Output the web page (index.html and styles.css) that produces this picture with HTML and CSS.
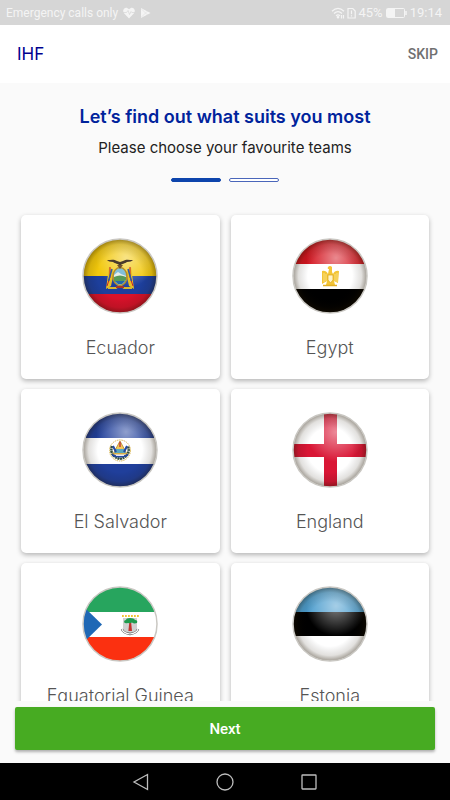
FILE: index.html
```
<!DOCTYPE html>
<html lang="en">
<head>
    <meta charset="UTF-8">
    <meta name="viewport" content="width=device-width, initial-scale=1.0">
    <title>IHF</title>
    <link rel="stylesheet" href="styles.css">
</head>
<body>
    <div class="status-bar">
        <div class="status-group carrier">
            <span>Emergency calls only</span>
            <svg class="heart-icon" width="12" height="12" viewBox="0 0 12 12">
                <path d="M6 11.5 1 6.3C-1.200 3 1.500-.2 4.200.9L6 2.300 7.800.9C10.500-.2 13.200 3 11 6.300Z" fill="#f4f4f4"/>
                <path d="M0 5.500h3.500L5 3.500l1.500 4 1.500-3 .8 1H12" fill="none" stroke="#d6d6d6" stroke-width=".7"/>
            </svg>
            <svg class="play-icon" width="11" height="12" viewBox="0 0 11 12">
                <path d="M1 1 10.500 6 1 11Z" fill="#f4f4f4"/>
                <path d="M1 1.500 8 8.500M1 10.500 8 3.500" stroke="#d6d6d6" stroke-width=".4"/>
            </svg>
        </div>
        <div class="status-group">
            <svg width="14" height="12" viewBox="0 0 14 12" fill="none" stroke="#f4f4f4" stroke-width="1.200">
                <path d="M1 4.200Q7-1.500 13 4.200M3 6.500Q7 2.800 11 6.500M5 8.700Q7 7 9 8.700"/>
                <circle cx="7" cy="10.300" r=".7" fill="#f4f4f4"/>
                <path d="M10.500 8v3.500M12.500 8v3.500"/>
            </svg>
            <svg class="sim-icon" width="9" height="12" viewBox="0 0 9 12" fill="none" stroke="#f4f4f4" stroke-width="1.200">
                <path d="M1 1.500h4.800L8.200 4v7H1ZM4.500 3.500v3.700M4.500 8.200v1.300"/>
            </svg>
            <span>45%</span>
            <svg class="battery-icon" width="21" height="10" viewBox="0 0 21 10">
                <rect x=".5" y=".5" width="18" height="9" rx="1" fill="none" stroke="#f4f4f4"/>
                <rect x="1" y="1" width="8" height="8" fill="#f4f4f4"/>
                <path d="M20 3v4" stroke="#f4f4f4" stroke-width="1.500"/>
            </svg>
            <span>19:14</span>
        </div>
    </div>

    <header class="app-bar">
        <h1>IHF</h1>
        <button type="button" class="skip">SKIP</button>
    </header>

    <main class="content">
        <div class="intro">
            <h2>Let’s find out what suits you most</h2>
            <p>Please choose your favourite teams</p>
            <div class="steps">
                <span class="step active"></span>
                <span class="step"></span>
            </div>
        </div>

        <div class="teams">
            <button type="button" class="team">
                <svg class="flag" viewBox="0 0 76 76">
                    <defs>
                        <clipPath id="round"><circle cx="38" cy="38" r="37"/></clipPath>
                        <radialGradient id="shade">
                            <stop offset=".6" stop-color="#000" stop-opacity="0"/>
                            <stop offset=".85" stop-color="#201400" stop-opacity=".13"/>
                            <stop offset="1" stop-color="#201400" stop-opacity=".42"/>
                        </radialGradient>
                        <radialGradient id="shine">
                            <stop offset="0" stop-color="#fff" stop-opacity=".5"/>
                            <stop offset=".6" stop-color="#fff" stop-opacity=".2"/>
                            <stop offset="1" stop-color="#fff" stop-opacity="0"/>
                        </radialGradient>
                        <g id="gloss">
                            <circle cx="44" cy="20" r="30" fill="url(#shine)"/>
                            <circle cx="38" cy="38" r="37" fill="url(#shade)"/>
                        </g>
                    </defs>
                    <g clip-path="url(#round)">
                        <path fill="#f2c80c" d="M0 0h76v38H0z"/>
                        <path fill="#1d3f9c" d="M0 38h76v18H0z"/>
                        <path fill="#d8122a" d="M0 56h76v20H0z"/>
                        <use href="#gloss"/>
                    </g>
                    <!-- coat of arms -->
                    <path d="M27 29 24 51l5-3 3-14ZM49 29l3 22-5-3-3-14Z" fill="#e8bf25"/>
                    <path d="M28 29v10l-3 9M48 29v10l3 9" fill="none" stroke="#c5202e" stroke-width="1"/>
                    <path d="M30 31 26.500 43M46 31l3.500 12" stroke="#2d58a7" stroke-width="1.500"/>
                    <path d="M26 50h8l4-3 4 3h8" fill="none" stroke="#d8b62d" stroke-width="2"/>
                    <ellipse cx="38" cy="38.500" rx="7" ry="9" fill="#82bfd9" stroke="#b68c25" stroke-width="1.500"/>
                    <path d="M32 37l4-3 3 2 5 2v3H32z" fill="#e7eee8"/>
                    <path d="M32 39q6-3 12 0v3q-6 4-12 1z" fill="#569a58"/>
                    <path d="M33 43h10l-3 3h-4z" fill="#2468a8"/>
                    <path d="M34 49h8" stroke="#a7352b" stroke-width="2"/>
                    <path d="M38 28c-2-3-5-2-7-4-3 0-5-1-6-2 4 0 7-1 10 1l3 1 3-1c3-2 6-1 10-1-1 1-3 2-6 2-2 2-5 1-7 4Z" fill="#493a2c"/>
                    <path d="M35 27h6l-3 4z" fill="#70512d"/>
                    <circle class="rim" cx="38" cy="38" r="37"/>
                </svg>
                <span>Ecuador</span>
            </button>

            <button type="button" class="team">
                <svg class="flag" viewBox="0 0 76 76">
                    <g clip-path="url(#round)">
                        <path fill="#d4141f" d="M0 0h76v26H0z"/>
                        <path fill="#fff" d="M0 26h76v25H0z"/>
                        <path fill="#000" d="M0 51h76v25H0z"/>
                        <use href="#gloss"/>
                    </g>
                    <!-- eagle -->
                    <path d="M30 33q4-1 6 3l1-5q-2 0-1-2 2-2 4 0v5l1 2q2-4 6-3l-1 12-4-2 1 4h-9l1-4-5 3z" fill="#f3c536"/>
                    <path d="M32 35v9M34 36v7M43 36v7M45 35v9" stroke="#fff0ae" stroke-width=".6"/>
                    <path d="M36 37h5v5l-2.500 3-2.500-3z" fill="#fff3c7" stroke="#dba719" stroke-width=".7"/>
                    <path d="M31 47.500h14" stroke="#e3af22" stroke-width="1.500"/>
                    <circle class="rim" cx="38" cy="38" r="37"/>
                </svg>
                <span>Egypt</span>
            </button>

            <button type="button" class="team">
                <svg class="flag" viewBox="0 0 76 76">
                    <g clip-path="url(#round)">
                        <path fill="#203f9b" d="M0 0h76v26H0z"/>
                        <path fill="#fff" d="M0 26h76v26H0z"/>
                        <path fill="#203f9b" d="M0 52h76v24H0z"/>
                        <use href="#gloss"/>
                    </g>
                    <!-- coat of arms -->
                    <circle cx="38" cy="38.500" r="10.500" fill="none" stroke="#dab755" stroke-width="1" stroke-dasharray="1.500 .8"/>
                    <path d="M30 34q-3 10 8 13 11-3 8-13" fill="none" stroke="#36503b" stroke-width="2.500" stroke-dasharray="2 .5"/>
                    <path d="M38 29l7 13H31z" fill="#f1c85a" stroke="#b48727" stroke-width=".8"/>
                    <path d="M34 37h8l2 4H32z" fill="#5aa6bc"/>
                    <path d="M38 30v5" stroke="#c23b3b" stroke-width="1.500"/>
                    <path d="M31 34l3 6M45 34l-3 6" stroke="#2449a1" stroke-width="2"/>
                    <path d="M30 42q8 3 16 0v2q-8 3-16 0z" fill="#2449a1"/>
                    <path d="M34 43.500h8" stroke="#fff" stroke-width=".8"/>
                    <circle class="rim" cx="38" cy="38" r="37"/>
                </svg>
                <span>El Salvador</span>
            </button>

            <button type="button" class="team">
                <svg class="flag" viewBox="0 0 76 76">
                    <g clip-path="url(#round)">
                        <path fill="#fff" d="M0 0h76v76H0z"/>
                        <path fill="#d91635" d="M32 0h13v32h31v13H45v31H32V45H0V32h32z"/>
                        <use href="#gloss"/>
                    </g>
                    <circle class="rim" cx="38" cy="38" r="37"/>
                </svg>
                <span>England</span>
            </button>

            <button type="button" class="team">
                <svg class="flag" viewBox="0 0 76 76">
                    <g clip-path="url(#round)">
                        <path fill="#27a55e" d="M0 0h76v26H0z"/>
                        <path fill="#fff" d="M0 26h76v25H0z"/>
                        <path fill="#fb3010" d="M0 51h76v25H0z"/>
                        <path fill="#1f68b5" d="M0 19l20 19.500L0 58z"/>
                    </g>
                    <!-- silk cotton tree -->
                    <path d="M41 32h14v10q-1 4-7 6-6-2-7-6z" fill="#d0d0d0"/>
                    <path d="M47.300 36h1.800l.9 9h-3.600z" fill="#c3322c"/>
                    <path d="M42 36q0-2 2-2 0-2 4-2t5 2q3 0 2 3-3 1-5-.5-2 1-4 .5-3 1-4-1z" fill="#1f9b4d"/>
                    <path d="M40 30h17" stroke="#f0c534" stroke-width="1.800" stroke-dasharray="1.800 1.200"/>
                    <path d="M40 43q1 4 8 5 7-1 8-5" fill="none" stroke="#555" stroke-width="2.400"/>
                    <path d="M40 43q1 4 8 5 7-1 8-5" fill="none" stroke="#fff" stroke-width="1.200"/>
                    <circle class="rim" cx="38" cy="38" r="37"/>
                </svg>
                <span>Equatorial Guinea</span>
            </button>

            <button type="button" class="team">
                <svg class="flag" viewBox="0 0 76 76">
                    <g clip-path="url(#round)">
                        <path fill="#4c9dce" d="M0 0h76v26H0z"/>
                        <path fill="#000" d="M0 26h76v24H0z"/>
                        <path fill="#fff" d="M0 50h76v26H0z"/>
                        <use href="#gloss"/>
                    </g>
                    <circle class="rim" cx="38" cy="38" r="37"/>
                </svg>
                <span>Estonia</span>
            </button>
        </div>
    </main>

    <div class="actions">
        <button type="button" class="next">Next</button>
    </div>

    <nav class="nav-bar">
        <button type="button" aria-label="Back">
            <svg width="18" height="18" viewBox="0 0 18 18"><path d="M15.500 1.500v15L2 9Z"/></svg>
        </button>
        <button type="button" aria-label="Home">
            <svg width="18" height="18" viewBox="0 0 18 18"><circle cx="9" cy="9" r="8"/></svg>
        </button>
        <button type="button" aria-label="Recent apps">
            <svg width="18" height="18" viewBox="0 0 18 18"><rect x="2" y="2" width="14" height="14" rx=".5"/></svg>
        </button>
    </nav>
</body>
</html>
```
FILE: styles.css
```
* {
    box-sizing: border-box;
}

body {
    display: flex;
    flex-direction: column;
    height: 100vh;
    margin: 0;
    background-color: #fafafa;
    font-family: Inter, sans-serif;
}

button {
    padding: 0;
    border: none;
    background: none;
    font-family: inherit;
    cursor: pointer;
}

.status-bar {
    display: flex;
    justify-content: space-between;
    align-items: center;
    height: 25px;
    padding: 0 8px 0 6px;
    background-color: #d6d6d6;
    color: #f4f4f4;
    font-family: Roboto, sans-serif;
    font-size: 13px;
}

.status-group {
    display: flex;
    align-items: center;
    gap: 2px;
}

.carrier {
    font-size: 12px;
}

.heart-icon {
    margin-left: 3px;
}

.play-icon {
    margin-left: 3px;
}

.battery-icon {
    margin: 0 1px;
}

.app-bar {
    display: flex;
    justify-content: space-between;
    align-items: center;
    height: 58px;
    padding: 0 12px 0 17px;
    background-color: #fff;
}

.app-bar h1 {
    margin: 0;
    color: #00008f;
    font-size: 17px;
    font-weight: 400;
}

.skip {
    color: #707070;
    font-family: Roboto, sans-serif;
    font-size: 14px;
    font-weight: 500;
}

.content {
    display: flex;
    flex: 1;
    flex-direction: column;
    min-height: 0;
}

.intro {
    padding: 23px 16px;
    text-align: center;
}

.intro h2 {
    margin: 0 0 10px;
    color: #00239c;
    font-size: 18px;
    font-weight: 600;
    line-height: 22px;
}

.intro p {
    margin: 0;
    color: #222;
    font-size: 15px;
    font-weight: 400;
    line-height: 20px;
}

.steps {
    display: flex;
    justify-content: center;
    gap: 8px;
    margin-top: 20px;
}

.step {
    width: 50px;
    height: 4px;
    border: 1px solid #4a66ba;
    border-radius: 2px;
    background-color: #fff;
}

.step.active {
    border-color: #0d44ac;
    background-color: #0d44ac;
}

.teams {
    display: grid;
    flex: 1;
    grid-template-columns: 1fr 1fr;
    grid-auto-rows: max-content;
    gap: 10px 11px;
    min-height: 0;
    padding: 10px 21px;
    overflow-y: auto;
    scrollbar-width: none;
}

.team {
    display: flex;
    flex-direction: column;
    align-items: center;
    gap: 22px;
    padding: 23px 0 20px;
    border-radius: 5px;
    background-color: #fff;
    box-shadow: 0 2px 5px rgba(0, 0, 0, 0.28);
    color: #555;
    font-size: 18px;
    font-weight: 300;
    line-height: 23px;
}

.flag {
    width: 76px;
    height: 76px;
}

.rim {
    fill: none;
    stroke: #c9c7c2;
    stroke-width: 1.5;
}

.actions {
    padding: 6px 15px 13px;
}

.next {
    display: block;
    width: 100%;
    height: 43px;
    border-radius: 2px;
    background-color: #47ab22;
    box-shadow: 0 2px 3px rgba(0, 0, 0, 0.3);
    color: #fff;
    font-family: Roboto, sans-serif;
    font-size: 15px;
    font-weight: 500;
}

.nav-bar {
    display: flex;
    justify-content: center;
    align-items: center;
    gap: 66px;
    height: 37px;
    background-color: #000;
}

.nav-bar button {
    display: flex;
}

.nav-bar svg {
    fill: none;
    stroke: #bdbdbd;
    stroke-width: 1.3;
}
```
